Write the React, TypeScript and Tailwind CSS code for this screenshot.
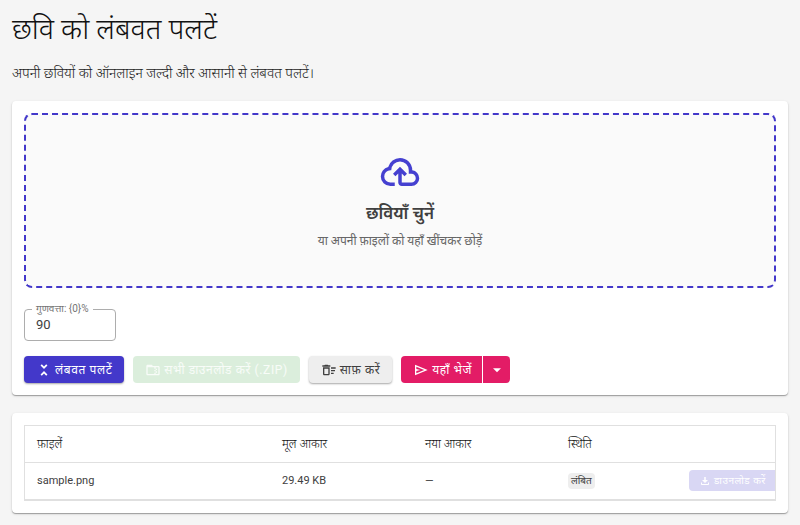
import type { ReactNode } from "react";

const icons = {
  cloudUpload:
    "M6.5 20Q4.22 20 2.61 18.43 1 16.85 1 14.58 1 12.63 2.17 11.1 3.35 9.57 5.25 9.15 5.88 6.85 7.75 5.43 9.63 4 12 4 14.93 4 16.96 6.04 19 8.07 19 11 20.73 11.2 21.86 12.5 23 13.78 23 15.5 23 17.38 21.69 18.69 20.38 20 18.5 20H13Q12.18 20 11.59 19.41 11 18.83 11 18V12.85L9.4 14.4L8 13L12 9L16 13L14.6 14.4L13 12.85V18H18.5Q19.55 18 20.27 17.27 21 16.55 21 15.5 21 14.45 20.27 13.73 19.55 13 18.5 13H17V11Q17 8.93 15.54 7.46 14.08 6 12 6 9.93 6 8.46 7.46 7 8.93 7 11H6.5Q5.05 11 4.03 12.03 3 13.05 3 14.5 3 15.95 4.03 17 5.05 18 6.5 18H9V20Z",
  flip: "M17.2 5.4L15.3 3.5L12 6.8L8.7 3.5L6.8 5.4L12 10.6M6.8 18.6L8.7 20.5L12 17.2L15.3 20.5L17.2 18.6L12 13.4L6.8 18.6Z",
  folderZip:
    "M20 6H12L10 4H4C2.9 4 2 4.9 2 6V18C2 19.1 2.9 20 4 20H20C21.1 20 22 19.1 22 18V8C22 6.9 21.1 6 20 6M20 18H16V16H14V18H4V8H14V10H16V8H20V18M16 12V10H18V12H16M14 12H16V14H14V12M18 16H16V14H18V16Z",
  clear:
    "M15 16H19V18H15V16M15 8H22V10H15V8M15 12H21V14H15V12M11 10V18H5V10H11M13 8H3V18C3 19.1 3.9 20 5 20H11C12.1 20 13 19.1 13 18V8M14 5H11L10 4H6L5 5H2V7H14V5Z",
  send: "M3 20V4L22 12M5 17L16.85 12L5 7V10.5L11 12L5 13.5M5 17V7V13.5Z",
  menuDown: "M6 9.5L12 15.5L18 9.5H6Z",
  download: "M12 16L6 10H10.5V4H13.5V10H18L12 16ZM4 15H6V18H18V15H20V18C20 19.1 19.1 20 18 20H6C4.9 20 4 19.1 4 18V15Z",
};

function Icon({ name, className = "size-4" }: { name: keyof typeof icons; className?: string }) {
  return (
    <svg viewBox="0 0 24 24" fill="currentColor" aria-hidden="true" className={`shrink-0 ${className}`}>
      <path d={icons[name]} />
    </svg>
  );
}

function Card({ children }: { children: ReactNode }) {
  return (
    <section className="rounded bg-white p-3 shadow-[0_1px_1px_rgba(0,0,0,0.3),0_1px_3px_rgba(0,0,0,0.12)]">
      {children}
    </section>
  );
}

const button = "flex h-[27px] items-center justify-center gap-[3px] whitespace-nowrap text-xs tracking-wider";
const raised = "shadow-[0_1px_2px_rgba(0,0,0,0.35)]";

export default function App() {
  return (
    <main className="min-h-screen bg-[#f5f5f5] px-3 pt-[13px] pb-3 font-[Roboto,'Noto_Sans','Noto_Sans_Devanagari',sans-serif] text-[#404040]">
      <h1 className="text-[29px] leading-8 font-light text-[#111111]">छवि को लंबवत पलटें</h1>
      <p className="my-5 text-sm leading-4 font-light text-[#222222]">अपनी छवियों को ऑनलाइन जल्दी और आसानी से लंबवत पलटें।</p>

      <div className="flex flex-col gap-[18px]">
        <Card>
          <button
            type="button"
            className="flex h-[175px] w-full flex-col items-center justify-center rounded-lg border-2 border-dashed border-[#4338ca] bg-[#fafafa]"
          >
            <Icon name="cloudUpload" className="size-[42px] text-[#4540d0]" />
            <span className="mt-2 text-[17px] leading-6 font-semibold">छवियाँ चुनें</span>
            <span className="mt-1.5 text-xs leading-5 text-[#666666]">या अपनी फ़ाइलों को यहाँ खींचकर छोड़ें</span>
          </button>

          <fieldset className="mt-[13px] h-10 w-[92px] rounded border border-[#adadad] px-[7px]">
            <legend className="h-4 overflow-hidden px-1 text-[10px] leading-4 text-[#757575]">
              <label htmlFor="quality">गुणवत्ता: {"{0}"}%</label>
            </legend>
            <input id="quality" defaultValue="90" inputMode="numeric" className="block w-full px-1 text-[13px] leading-4 outline-none" />
          </fieldset>

          <div className="mt-[15px] flex flex-wrap gap-[9px]">
            <button type="button" className={`${button} ${raised} rounded-sm bg-[#4338ca] px-3 text-white`}>
              <Icon name="flip" />
              लंबवत पलटें
            </button>
            <button type="button" disabled className={`${button} rounded-sm bg-[#dbeedc] px-3 text-white/80`}>
              <Icon name="folderZip" />
              सभी डाउनलोड करें (.ZIP)
            </button>
            <button type="button" className={`${button} ${raised} rounded-sm bg-[#eeeeee] px-3`}>
              <Icon name="clear" />
              साफ़ करें
            </button>
            <div className="flex gap-px">
              <button type="button" className={`${button} rounded-l-sm bg-[#e31c66] pr-2.5 pl-3 text-white`}>
                <Icon name="send" />
                यहाँ भेजें
              </button>
              <button type="button" aria-label="यहाँ भेजें" className={`${button} w-[27px] rounded-r-sm bg-[#e31c66] text-white`}>
                <Icon name="menuDown" />
              </button>
            </div>
          </div>
        </Card>

        <Card>
          <div className="overflow-hidden border border-b-2 border-[#e0e0e0]">
            <table className="w-full table-fixed text-left text-[11px]">
              <colgroup>
                <col />
                <col className="w-[143px]" />
                <col className="w-[143px]" />
                <col className="w-[121px]" />
                <col className="w-[98px]" />
              </colgroup>
              <thead>
                <tr className="h-9 border-b border-[#e0e0e0] text-xs text-[#111111]">
                  <th className="px-3 font-light">फ़ाइलें</th>
                  <th className="px-3 font-light">मूल आकार</th>
                  <th className="px-3 font-light">नया आकार</th>
                  <th className="px-3 font-light">स्थिति</th>
                  <td />
                </tr>
              </thead>
              <tbody>
                <tr className="h-[37px]">
                  <td className="px-3">sample.png</td>
                  <td className="px-3">29.49 KB</td>
                  <td className="px-3">—</td>
                  <td className="px-3">
                    <span className="inline-block rounded bg-[#eeeeee] px-[3px] text-[10px] leading-4">लंबित</span>
                  </td>
                  <td className="pl-3">
                    <button
                      type="button"
                      disabled
                      className="flex h-[21px] w-24 items-center gap-[3px] rounded-sm bg-[#d9d7f4] px-2.5 text-[10px] tracking-wider whitespace-nowrap text-white"
                    >
                      <Icon name="download" className="size-3" />
                      डाउनलोड करें
                    </button>
                  </td>
                </tr>
              </tbody>
            </table>
          </div>
        </Card>
      </div>
    </main>
  );
}
